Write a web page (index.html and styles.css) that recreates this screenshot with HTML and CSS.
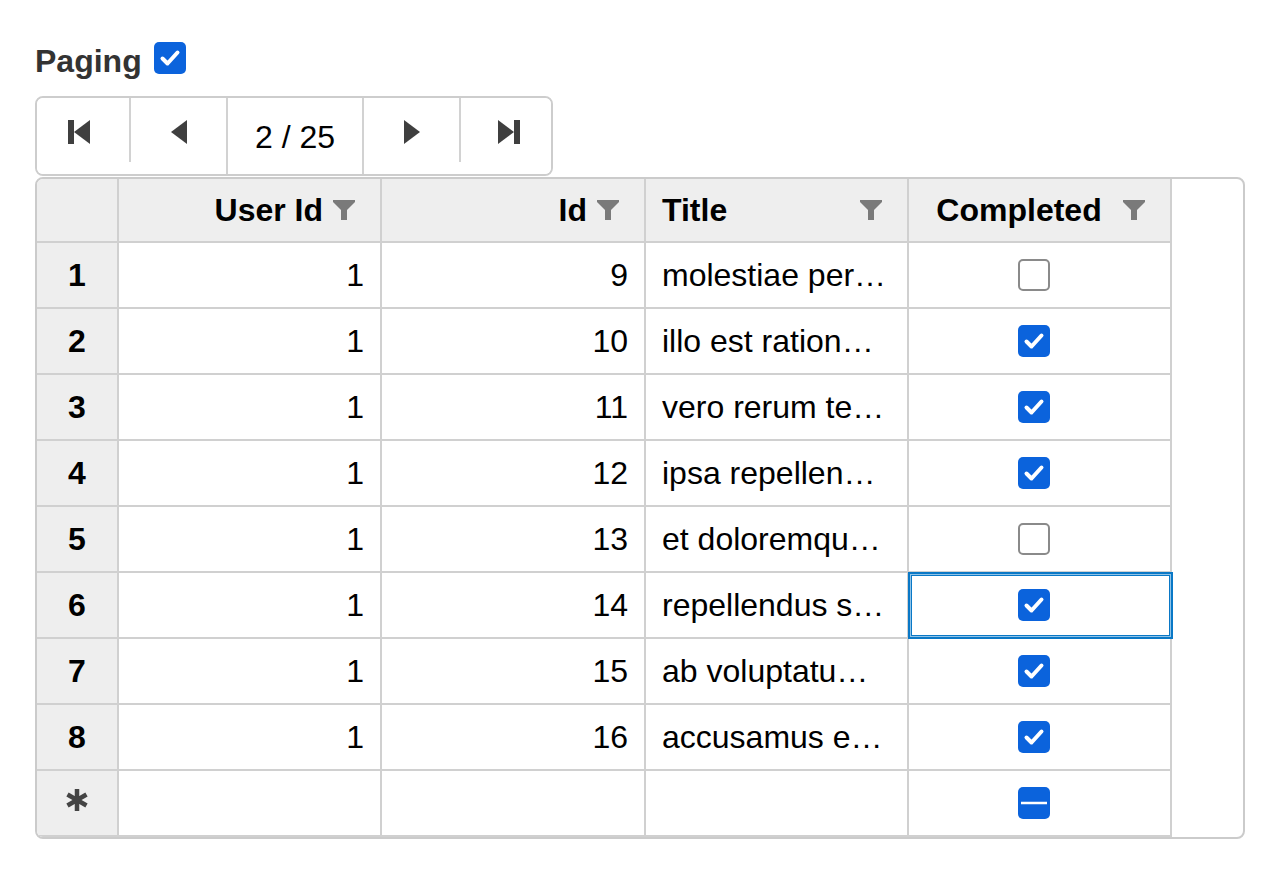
FILE: index.html
```html
<!DOCTYPE html>
<html lang="en">
<head>
<meta charset="utf-8">
<title>FlexGrid paging</title>
<link rel="stylesheet" href="styles.css">
</head>
<body>
<div class="page">
  <label class="paging">
    <span class="paging-text">Paging</span>
    <span class="cb cb-checked"><svg viewBox="0 0 32 32" width="32" height="32"><path d="M8.5 16.5 L13.5 21.5 L23.5 10.5" fill="none" stroke="#fff" stroke-width="4" stroke-linecap="round" stroke-linejoin="round"/></svg></span>
  </label>

  <div class="pager">
    <button class="pg-btn pg-first" type="button" aria-label="First page"><svg width="22" height="24" viewBox="0 0 22 24"><rect x="0" y="0" width="6" height="24" fill="#3f3f3f"/><polygon points="6,12 22,0 22,24" fill="#3f3f3f"/></svg></button>
    <span class="sep-short"></span>
    <button class="pg-btn pg-mid" type="button" aria-label="Previous page"><svg width="16" height="24" viewBox="0 0 16 24"><polygon points="0,12 16,0 16,24" fill="#3f3f3f"/></svg></button>
    <div class="pg-pos">2 / 25</div>
    <button class="pg-btn pg-mid" type="button" aria-label="Next page"><svg width="16" height="24" viewBox="0 0 16 24"><polygon points="0,0 16,12 0,24" fill="#3f3f3f"/></svg></button>
    <span class="sep-short"></span>
    <button class="pg-btn pg-last" type="button" aria-label="Last page"><svg width="22" height="24" viewBox="0 0 22 24"><polygon points="0,0 16,12 0,24" fill="#3f3f3f"/><rect x="16" y="0" width="6" height="24" fill="#3f3f3f"/></svg></button>
  </div>

  <div class="grid">
    <div class="cells">
      <!-- header -->
      <div class="hd hd-corner"></div>
      <div class="hd"><span class="hd-text al-right">User Id</span><svg class="filter" width="22" height="20" viewBox="0 0 22 20"><path d="M0 0 H22 V2 L14 10 V20 H8 V10 L0 2 Z"/></svg></div>
      <div class="hd"><span class="hd-text al-right">Id</span><svg class="filter" width="22" height="20" viewBox="0 0 22 20"><path d="M0 0 H22 V2 L14 10 V20 H8 V10 L0 2 Z"/></svg></div>
      <div class="hd"><span class="hd-text al-left">Title</span><svg class="filter" width="22" height="20" viewBox="0 0 22 20"><path d="M0 0 H22 V2 L14 10 V20 H8 V10 L0 2 Z"/></svg></div>
      <div class="hd"><span class="hd-text al-center">Completed</span><svg class="filter" width="22" height="20" viewBox="0 0 22 20"><path d="M0 0 H22 V2 L14 10 V20 H8 V10 L0 2 Z"/></svg></div>

      <!-- row 1 -->
      <div class="rh">1</div>
      <div class="c num">1</div>
      <div class="c num">9</div>
      <div class="c txt">molestiae perspiciatis ipsa</div>
      <div class="c chk"><span class="cb cb-empty"></span></div>

      <!-- row 2 -->
      <div class="rh">2</div>
      <div class="c num">1</div>
      <div class="c num">10</div>
      <div class="c txt">illo est ratione doloremque quia maiores aut</div>
      <div class="c chk"><span class="cb cb-checked"><svg viewBox="0 0 32 32" width="32" height="32"><path d="M8.5 16.5 L13.5 21.5 L23.5 10.5" fill="none" stroke="#fff" stroke-width="4" stroke-linecap="round" stroke-linejoin="round"/></svg></span></div>

      <!-- row 3 -->
      <div class="rh">3</div>
      <div class="c num">1</div>
      <div class="c num">11</div>
      <div class="c txt">vero rerum temporibus dolor</div>
      <div class="c chk"><span class="cb cb-checked"><svg viewBox="0 0 32 32" width="32" height="32"><path d="M8.5 16.5 L13.5 21.5 L23.5 10.5" fill="none" stroke="#fff" stroke-width="4" stroke-linecap="round" stroke-linejoin="round"/></svg></span></div>

      <!-- row 4 -->
      <div class="rh">4</div>
      <div class="c num">1</div>
      <div class="c num">12</div>
      <div class="c txt">ipsa repellendus fugit nisi</div>
      <div class="c chk"><span class="cb cb-checked"><svg viewBox="0 0 32 32" width="32" height="32"><path d="M8.5 16.5 L13.5 21.5 L23.5 10.5" fill="none" stroke="#fff" stroke-width="4" stroke-linecap="round" stroke-linejoin="round"/></svg></span></div>

      <!-- row 5 -->
      <div class="rh">5</div>
      <div class="c num">1</div>
      <div class="c num">13</div>
      <div class="c txt">et doloremque nulla</div>
      <div class="c chk"><span class="cb cb-empty"></span></div>

      <!-- row 6 -->
      <div class="rh">6</div>
      <div class="c num">1</div>
      <div class="c num">14</div>
      <div class="c txt">repellendus sunt dolores architecto voluptatum</div>
      <div class="c chk selected"><span class="cb cb-checked"><svg viewBox="0 0 32 32" width="32" height="32"><path d="M8.5 16.5 L13.5 21.5 L23.5 10.5" fill="none" stroke="#fff" stroke-width="4" stroke-linecap="round" stroke-linejoin="round"/></svg></span></div>

      <!-- row 7 -->
      <div class="rh">7</div>
      <div class="c num">1</div>
      <div class="c num">15</div>
      <div class="c txt">ab voluptatum amet voluptas</div>
      <div class="c chk"><span class="cb cb-checked"><svg viewBox="0 0 32 32" width="32" height="32"><path d="M8.5 16.5 L13.5 21.5 L23.5 10.5" fill="none" stroke="#fff" stroke-width="4" stroke-linecap="round" stroke-linejoin="round"/></svg></span></div>

      <!-- row 8 -->
      <div class="rh">8</div>
      <div class="c num">1</div>
      <div class="c num">16</div>
      <div class="c txt">accusamus eos facilis sint et aut voluptatem</div>
      <div class="c chk"><span class="cb cb-checked"><svg viewBox="0 0 32 32" width="32" height="32"><path d="M8.5 16.5 L13.5 21.5 L23.5 10.5" fill="none" stroke="#fff" stroke-width="4" stroke-linecap="round" stroke-linejoin="round"/></svg></span></div>

      <!-- new row -->
      <div class="rh rh-new"><svg width="24" height="24" viewBox="0 0 24 24"><g stroke="#444" stroke-width="4.5"><line x1="12" y1="1" x2="12" y2="23"/><line x1="2.5" y1="6.5" x2="21.5" y2="17.5"/><line x1="2.5" y1="17.5" x2="21.5" y2="6.5"/></g></svg></div>
      <div class="c num"></div>
      <div class="c num"></div>
      <div class="c txt"></div>
      <div class="c chk"><span class="cb cb-mixed"><svg viewBox="0 0 32 32" width="32" height="32"><line x1="3" y1="16" x2="29" y2="16" stroke="#fff" stroke-width="2.5"/></svg></span></div>
    </div>
  </div>
</div>
</body>
</html>
```

FILE: styles.css
```css
html, body {
  margin: 0;
  padding: 0;
  background: #fff;
}

body {
  font-family: "Liberation Sans", Arial, sans-serif;
  font-size: 32px;
  color: #000;
}

.page {
  padding: 42px 0 0 35px;
}

/* Paging toggle */
.paging {
  display: flex;
  align-items: center;
  gap: 12px;
  height: 32px;
  font-weight: bold;
  color: #333;
}

.paging-text {
  line-height: 32px;
  padding-top: 5px;
}

/* checkboxes */
.cb {
  display: inline-block;
  width: 32px;
  height: 32px;
  box-sizing: border-box;
  border-radius: 5px;
  flex: none;
}

.cb svg {
  display: block;
}

.cb-checked,
.cb-mixed {
  background: #0b63dc;
}

.cb-empty {
  background: #fff;
  border: 2px solid #8a8a8a;
}

/* Pager */
.pager {
  margin-top: 22px;
  width: 518px;
  height: 80px;
  box-sizing: border-box;
  border: 2px solid #cdcdcd;
  border-radius: 8px;
  display: flex;
  overflow: hidden;
  background: #fff;
}

.pg-btn {
  border: none;
  background: #fff;
  margin: 0;
  padding: 0;
  display: flex;
  align-items: center;
  justify-content: center;
  font: inherit;
}

.pg-btn svg {
  display: block;
  margin-bottom: 8px;
}

.pg-first {
  width: 92px;
  padding-right: 8px;
}

.pg-mid {
  width: 95px;
}

.pg-last {
  width: 90px;
  padding-left: 5px;
}

.sep-short {
  width: 2px;
  height: 64px;
  background: #d2d2d2;
  flex: none;
}

.pg-pos {
  width: 138px;
  box-sizing: border-box;
  border-left: 2px solid #d2d2d2;
  border-right: 2px solid #d2d2d2;
  display: flex;
  align-items: center;
  justify-content: center;
  padding-top: 2px;
}

/* Grid */
.grid {
  margin-top: 1px;
  width: 1210px;
  box-sizing: border-box;
  border: 2px solid #cbcbcb;
  border-radius: 8px;
  overflow: hidden;
  background: #fff;
}

.cells {
  display: grid;
  grid-template-columns: 82px 263px 264px 263px 263px;
  grid-template-rows: 64px;
  grid-auto-rows: 66px;
  width: max-content;
}

.hd,
.rh,
.c {
  box-sizing: border-box;
  border-right: 2px solid #d0d0d0;
  border-bottom: 2px solid #d0d0d0;
  white-space: nowrap;
  overflow: hidden;
}

.hd {
  background: #eeeeee;
  font-weight: bold;
  display: flex;
  align-items: center;
  padding: 0 16px;
}

.hd-corner {
  padding: 0;
}

.hd-text {
  flex: 1;
  min-width: 0;
}

.al-right { text-align: right; }
.al-left { text-align: left; }
.al-center { text-align: center; }

.filter {
  flex: none;
  display: block;
  margin-left: 10px;
  margin-right: 9px;
  fill: #7a7a7a;
}

.rh {
  background: #eeeeee;
  font-weight: bold;
  display: flex;
  align-items: center;
  justify-content: center;
}

.rh-new svg {
  display: block;
  margin-bottom: 7px;
}

.c {
  padding: 0 16px;
  line-height: 64px;
}

.num {
  text-align: right;
}

.txt {
  text-align: left;
  text-overflow: ellipsis;
}

.chk {
  display: flex;
  align-items: center;
  justify-content: center;
  padding: 0 28px 0 16px;
  overflow: visible;
}

.selected {
  position: relative;
}

.selected::after {
  content: "";
  position: absolute;
  top: -1px;
  left: -1px;
  right: -3px;
  bottom: -2px;
  border: 2px solid #0a78c6;
  box-shadow: inset 0 0 0 1px #8fc3e8, inset 0 0 0 2px #0a78c6;
  pointer-events: none;
}
```
